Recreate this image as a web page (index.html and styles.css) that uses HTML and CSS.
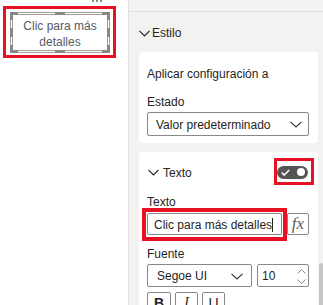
FILE: index.html
```html
<!DOCTYPE html>
<html lang="es">
<head>
<meta charset="utf-8">
<link rel="stylesheet" href="styles.css">
</head>
<body>
<div class="app">
  <div class="canvas">
    <div class="more"><span class="dot"></span><span class="dot"></span><span class="dot"></span></div>
    <div class="visual">
      <div class="visual-text">Clic para más<br>detalles</div>
      <span class="h h-tl"></span><span class="h h-tr"></span><span class="h h-bl"></span><span class="h h-br"></span>
      <span class="h h-tm"></span><span class="h h-bm"></span><span class="h h-lm"></span><span class="h h-rm"></span>
    </div>
  </div>
  <div class="panel">
    <div class="panel-top"></div>
    <div class="section-head">
      <svg class="chev" width="11" height="7" viewBox="0 0 11 7"><polyline points="0.5,0.8 5.5,5.8 10.5,0.8" fill="none" stroke="#252423" stroke-width="1.2"/></svg>
      <span>Estilo</span>
    </div>
    <div class="card card1">
      <div class="title">Aplicar configuración a</div>
      <div class="label lbl-estado">Estado</div>
      <div class="select wide">
        <span>Valor predeterminado</span>
        <svg width="12" height="7" viewBox="0 0 12 7"><polyline points="0.5,0.8 6,6 11.5,0.8" fill="none" stroke="#323130" stroke-width="1.1"/></svg>
      </div>
    </div>
    <div class="card card2">
      <div class="card-head">
        <svg class="chev" width="11" height="7" viewBox="0 0 11 7"><polyline points="0.5,0.8 5.5,5.8 10.5,0.8" fill="none" stroke="#252423" stroke-width="1.2"/></svg>
        <span class="head-text">Texto</span>
        <span class="toggle">
          <svg width="9" height="7" viewBox="0 0 9 7"><polyline points="0.8,3.6 3.2,6 8.2,1" fill="none" stroke="#fff" stroke-width="1.6"/></svg>
          <span class="knob"></span>
        </span>
      </div>
      <div class="label">Texto</div>
      <div class="row">
        <div class="input">Clic para más detalles<span class="caret"></span></div>
        <div class="fx">fx</div>
      </div>
      <div class="label lbl-fuente">Fuente</div>
      <div class="row">
        <div class="select font">
          <span>Segoe UI</span>
          <svg width="12" height="7" viewBox="0 0 12 7"><polyline points="0.5,0.8 6,6 11.5,0.8" fill="none" stroke="#323130" stroke-width="1.1"/></svg>
        </div>
        <div class="size">
          <span>10</span>
          <span class="spin">
            <svg width="9" height="5" viewBox="0 0 9 5"><polyline points="0.5,4.5 4.5,0.7 8.5,4.5" fill="none" stroke="#8a8886" stroke-width="1"/></svg>
            <svg width="9" height="5" viewBox="0 0 9 5"><polyline points="0.5,0.5 4.5,4.3 8.5,0.5" fill="none" stroke="#8a8886" stroke-width="1"/></svg>
          </span>
        </div>
      </div>
      <div class="fmt">
        <div class="fbtn b">B</div>
        <div class="fbtn i">I</div>
        <div class="fbtn u">U</div>
      </div>
    </div>
    <div class="scroll-thumb"></div>
  </div>
</div>
<div class="mark mark1"></div>
<div class="mark mark2"></div>
<div class="mark mark3"></div>
</body>
</html>
```
FILE: styles.css
```css
* { box-sizing: border-box; }
html, body { margin: 0; padding: 0; }
body {
  width: 323px;
  height: 305px;
  overflow: hidden;
  background: #fff;
  font-family: "Liberation Sans", Arial, sans-serif;
  font-size: 12px;
  color: #252423;
  position: relative;
}
.app { display: flex; height: 305px; overflow: hidden; }

.canvas { width: 128px; flex: none; padding: 0 0 0 10px; }
.more {
  display: flex;
  align-items: flex-start;
  gap: 2px;
  height: 12px;
  padding-left: 82px;
}
.dot { display: block; width: 2px; height: 2px; background: #8a8886; }
.visual {
  position: relative;
  width: 100px;
  height: 41px;
  border: 3px double #a19f9d;
}
.visual-text {
  text-align: center;
  line-height: 16px;
  padding-top: 3px;
  color: #56596a;
}
.h { position: absolute; background: #8a8886; }
.h-tl, .h-tr, .h-bl, .h-br { width: 8px; height: 8px; background: none; border: 0 solid #8a8886; }
.h-tl { left: -3px; top: -3px; border-left-width: 3px; border-top-width: 3px; }
.h-tr { right: -3px; top: -3px; border-right-width: 3px; border-top-width: 3px; }
.h-bl { left: -3px; bottom: -3px; border-left-width: 3px; border-bottom-width: 3px; }
.h-br { right: -3px; bottom: -3px; border-right-width: 3px; border-bottom-width: 3px; }
.h-tm, .h-bm { width: 10px; height: 3px; left: 42px; }
.h-tm { top: -3px; }
.h-bm { bottom: -3px; }
.h-lm, .h-rm { width: 3px; height: 9px; top: 13px; }
.h-lm { left: -3px; }
.h-rm { right: -3px; }

.panel {
  flex: 1;
  position: relative;
  background: #f3f2f1;
  border-left: 1px solid #e1dfdd;
}
.panel-top { height: 12px; border-bottom: 1px solid #e1dfdd; }
.section-head {
  height: 40px;
  display: flex;
  align-items: center;
  gap: 2px;
  padding-left: 10px;
  padding-top: 2px;
}
.chev { flex: none; }
.card {
  background: #fff;
  border-radius: 4px;
  margin: 0 5px 0 10px;
  padding: 0 9px 0 8px;
}
.card1 { padding-top: 13px; padding-bottom: 7px; }
.title { line-height: 18px; }
.label { line-height: 18px; color: #252423; padding-top: 1px; }
.lbl-estado { margin-top: 9px; }
.select {
  display: flex;
  align-items: center;
  justify-content: space-between;
  border: 1px solid #8a8886;
  border-radius: 2px;
  background: #fff;
  padding: 0 6px 0 8px;
}
.select.wide { height: 24px; margin-top: 1px; padding-top: 1px; }

.card2 { margin-top: 9px; padding-bottom: 14px; }
.card-head {
  height: 40px;
  display: flex;
  align-items: center;
  padding-left: 1px;
}
.head-text { margin-left: 4px; flex: 1; padding-top: 2px; }
.toggle {
  width: 31px;
  height: 13px;
  border-radius: 7px;
  background: #545454;
  display: flex;
  align-items: center;
  justify-content: space-between;
  padding: 0 3px 0 4px;
  margin-right: 1px;
}
.knob { width: 8px; height: 8px; border-radius: 50%; background: #fff; }
.row { display: flex; gap: 5px; margin-top: 2px; }
.input {
  width: 135px;
  height: 22px;
  border: 1px solid #8a8886;
  border-radius: 2px;
  display: flex;
  align-items: center;
  padding-left: 6px;
  padding-top: 1px;
  white-space: nowrap;
}
.caret { width: 1px; height: 14px; background: #252423; }
.fx {
  width: 22px;
  height: 22px;
  border: 1px solid #8a8886;
  border-radius: 2px;
  font-family: "Liberation Serif", serif;
  font-style: italic;
  font-size: 17px;
  display: flex;
  align-items: center;
  justify-content: center;
  color: #605e5c;
}
.lbl-fuente { margin-top: 9px; }
.lbl-fuente + .row { margin-top: 1px; }
.select.font { width: 105px; height: 23px; padding-left: 9px; padding-right: 8px; padding-top: 1px; }
.size {
  width: 52px;
  height: 23px;
  border: 1px solid #8a8886;
  border-radius: 2px;
  display: flex;
  align-items: center;
  justify-content: space-between;
  padding: 1px 2px 0 4px;
}
.spin { display: flex; flex-direction: column; gap: 5px; }
.spin svg { display: block; }
.fmt { display: flex; gap: 4px; margin-top: 5px; }
.fbtn {
  width: 24px;
  height: 22px;
  border: 1px solid #8a8886;
  border-radius: 2px;
  display: flex;
  justify-content: center;
  padding-top: 2px;
  font-size: 14px;
  line-height: 16px;
}
.fbtn.b { font-weight: bold; }
.fbtn.i { font-style: italic; font-family: "Liberation Serif", serif; width: 23px; }
.fbtn.u { text-decoration: underline; width: 23px; }
.scroll-thumb {
  position: absolute;
  right: 0;
  top: 263px;
  width: 4px;
  height: 50px;
  border-radius: 2px;
  background: #c8c6c4;
}

.mark { position: absolute; border: 3px solid #e81123; }
.mark1 { left: 3px; top: 6px; width: 113px; height: 52px; }
.mark2 { left: 274px; top: 158px; width: 40px; height: 27px; }
.mark3 { left: 142px; top: 208px; width: 145px; height: 33px; border-width: 4px; }
```
